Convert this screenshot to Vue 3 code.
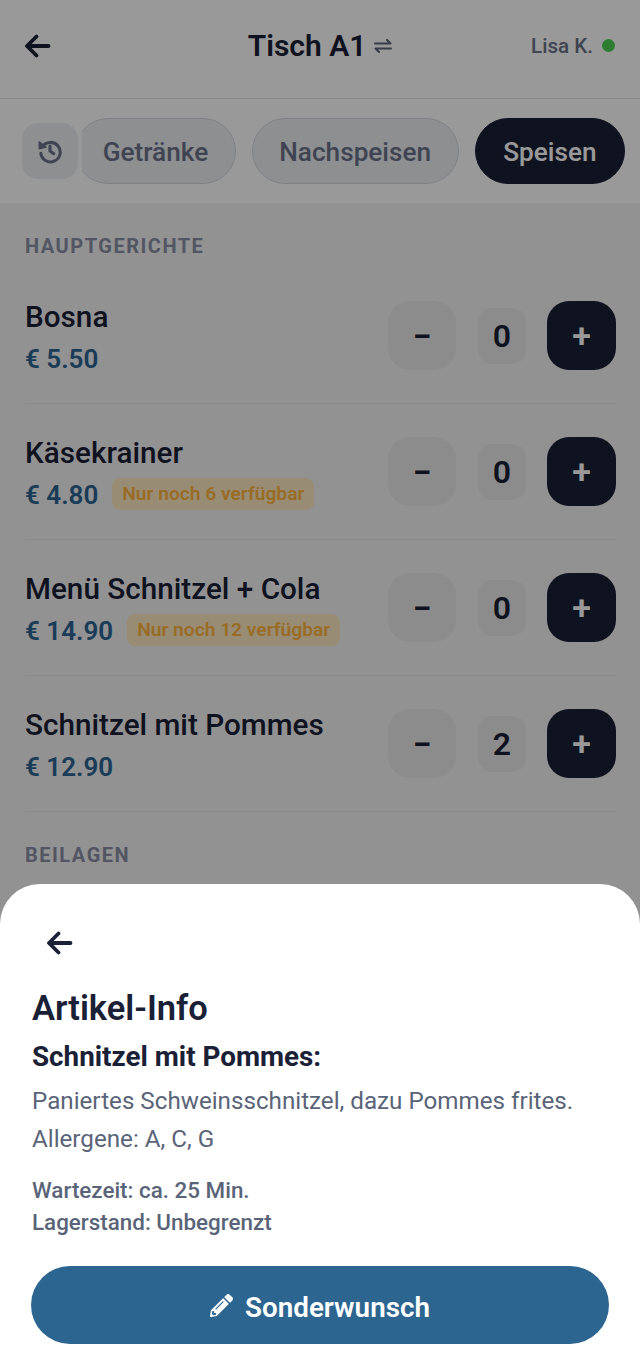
<template>
  <div class="page">
    <header class="topbar">
      <svg class="back" viewBox="0 0 26 24" fill="none" stroke="currentColor" stroke-width="3.800" stroke-linecap="round" stroke-linejoin="round">
        <path d="M23.500 12H3M11.500 2.500 2 12l9.500 9.500" />
      </svg>
      <div class="table">
        <span>Tisch A1</span>
        <svg class="swap" viewBox="0 0 18 14" fill="none" stroke="currentColor" stroke-width="2" stroke-linecap="round" stroke-linejoin="round">
          <path d="M1 4.500h15.500L13 1M17 9.500H1.500L5 13" />
        </svg>
      </div>
      <div class="user">
        <span>Lisa K.</span>
        <i class="dot"></i>
      </div>
    </header>

    <nav class="tabs">
      <button class="history">
        <svg viewBox="0 0 24 24" fill="none" stroke="currentColor" stroke-width="2.800" stroke-linecap="round" stroke-linejoin="round">
          <path d="M5 8a9 9 0 1 1-1.500 6" />
          <path d="M12 7.500V12l3.500 2.500" />
          <path d="M2 3.500 8.500 8.500 2 10z" fill="currentColor" stroke-width="1.200" />
        </svg>
      </button>
      <div class="tab-scroll">
        <button v-for="tab in tabs" :key="tab" class="tab" :class="{ active: tab === 'Speisen' }">{{ tab }}</button>
      </div>
    </nav>

    <main class="list">
      <h2 class="section">HAUPTGERICHTE</h2>
      <div v-for="item in items" :key="item.name" class="row">
        <div class="info">
          <div class="name">{{ item.name }}</div>
          <div class="meta">
            <span class="price">€ {{ item.price }}</span>
            <span v-if="item.stock" class="badge">Nur noch {{ item.stock }} verfügbar</span>
          </div>
        </div>
        <div class="stepper">
          <button class="minus">−</button>
          <span class="qty">{{ item.qty }}</span>
          <button class="plus">+</button>
        </div>
      </div>
      <h2 class="section second">BEILAGEN</h2>
    </main>

    <div class="overlay"></div>

    <section class="sheet">
      <svg class="sheet-back" viewBox="0 0 26 24" fill="none" stroke="currentColor" stroke-width="3.800" stroke-linecap="round" stroke-linejoin="round">
        <path d="M23.500 12H3M11.500 2.500 2 12l9.500 9.500" />
      </svg>
      <h1>Artikel-Info</h1>
      <h3>Schnitzel mit Pommes:</h3>
      <p class="desc">Paniertes Schweinsschnitzel, dazu Pommes frites.</p>
      <p class="desc">Allergene: A, C, G</p>
      <div class="facts">
        <div>Wartezeit: ca. 25 Min.</div>
        <div>Lagerstand: Unbegrenzt</div>
      </div>
      <button class="wish">
        <svg viewBox="0 0 512 512" fill="currentColor">
          <path d="M497.900 142.100l-46.100 46.100c-4.700 4.700-12.300 4.700-17 0l-111-111c-4.700-4.700-4.700-12.300 0-17l46.100-46.100c18.700-18.700 49.100-18.700 67.900 0l60.100 60.100c18.800 18.700 18.800 49.100 0 67.900zM284.200 99.800L21.600 362.400.4 483.900c-2.900 16.400 11.400 30.600 27.800 27.800l121.500-21.300 262.600-262.600c4.700-4.700 4.700-12.300 0-17l-111-111c-4.800-4.700-12.400-4.700-17.100 0zM124.100 339.900c-5.500-5.500-5.500-14.300 0-19.800l154-154c5.500-5.500 14.300-5.500 19.800 0s5.500 14.300 0 19.800l-154 154c-5.500 5.500-14.300 5.500-19.800 0zM88 424h48v36.300l-64.500 11.300-31.100-31.100L51.700 376H88v48z" />
        </svg>
        <span>Sonderwunsch</span>
      </button>
    </section>
  </div>
</template>

<script setup>
const tabs = ['Getränke', 'Nachspeisen', 'Speisen']

const items = [
  { name: 'Bosna', price: '5.50', qty: 0 },
  { name: 'Käsekrainer', price: '4.80', stock: 6, qty: 0 },
  { name: 'Menü Schnitzel + Cola', price: '14.90', stock: 12, qty: 0 },
  { name: 'Schnitzel mit Pommes', price: '12.90', qty: 2 }
]
</script>

<style>
body {
  margin: 0;
}
</style>

<style scoped>
.page {
  position: relative;
  width: 640px;
  height: 1369px;
  overflow: hidden;
  background: #f3f4f6;
  color: #1a2035;
  font-family: Roboto, "Liberation Sans", sans-serif;
}

button {
  font-family: inherit;
  border: 0;
  padding: 0;
}

.topbar {
  display: flex;
  align-items: center;
  justify-content: space-between;
  height: 99px;
  padding: 0 25px 7px;
  box-sizing: border-box;
  background: #fff;
  border-bottom: 1px solid #e5e7eb;
}

.back {
  width: 26px;
  height: 24px;
}

.table {
  display: flex;
  align-items: center;
  gap: 8px;
  font-size: 30px;
  font-weight: 600;
  margin-left: 58px;
}

.swap {
  width: 18px;
  height: 14px;
  color: #5a6478;
}

.user {
  display: flex;
  align-items: center;
  gap: 9px;
  font-size: 20.600px;
  font-weight: 500;
  color: #6b7289;
}

.dot {
  width: 13px;
  height: 13px;
  border-radius: 50%;
  background: #4bd055;
}

.tabs {
  display: flex;
  align-items: center;
  height: 104px;
  padding: 0 15px 0 22px;
  box-sizing: border-box;
  background: #fff;
}

.history {
  flex: none;
  display: flex;
  align-items: center;
  justify-content: center;
  width: 56px;
  height: 56px;
  margin-right: 4px;
  border-radius: 16px;
  background: #eceef1;
  color: #6b7289;
}

.history svg {
  width: 26px;
  height: 26px;
}

.tab-scroll {
  flex: 1;
  display: flex;
  justify-content: flex-end;
  gap: 16px;
  overflow: hidden;
}

.tab {
  flex: none;
  height: 66px;
  padding: 2px 26.500px 0;
  border-radius: 33px;
  border: 1px solid #d6d8de;
  background: #eceef1;
  color: #6b7289;
  font-size: 26.200px;
  font-weight: 500;
}

.tab.active {
  padding: 2px 27.500px 0;
  background: #1a2035;
  border-color: #1a2035;
  color: #fff;
}

.list {
  padding: 31px 24px 0 25px;
}

.section {
  margin: 0 0 10px;
  font-size: 20px;
  line-height: 24px;
  font-weight: 700;
  letter-spacing: 1.500px;
  color: #8a8fa3;
}

.section.second {
  margin-top: 31px;
}

.row {
  display: flex;
  align-items: center;
  justify-content: space-between;
  height: 136px;
  box-sizing: border-box;
  border-bottom: 1px solid #e5e7eb;
}

.info {
  padding-top: 3px;
}

.name {
  font-size: 29.700px;
  line-height: 36px;
  font-weight: 500;
}

.meta {
  display: flex;
  align-items: center;
  gap: 14px;
  margin-top: 8px;
}

.price {
  font-size: 26px;
  line-height: 32px;
  font-weight: 600;
  color: #2d6591;
}

.badge {
  margin-top: -2px;
  padding: 0 10px;
  height: 32px;
  line-height: 32px;
  border-radius: 8px;
  background: #fde9c4;
  color: #ffb53f;
  font-size: 19.200px;
  font-weight: 600;
}

.stepper {
  display: flex;
  align-items: center;
  gap: 21px;
}

.minus,
.plus {
  width: 68px;
  height: 69px;
  border-radius: 22px;
  font-size: 34px;
  font-weight: 600;
}

.plus {
  width: 69px;
  padding-bottom: 2px;
  background: #1a2035;
  color: #fff;
}

.minus {
  margin-right: 1px;
  background: #e9eaec;
  color: #1a2035;
}

.qty {
  display: flex;
  align-items: center;
  justify-content: center;
  width: 48px;
  height: 56px;
  border-radius: 14px;
  background: #e9eaec;
  font-size: 32px;
  font-weight: 600;
}

.overlay {
  position: absolute;
  inset: 0;
  background: rgba(0, 0, 0, 0.4);
}

.sheet {
  position: absolute;
  left: 0;
  right: 0;
  bottom: 0;
  height: 485px;
  box-sizing: border-box;
  padding: 47px 31px 0 32px;
  background: #fff;
  border-radius: 40px 40px 0 0;
}

.sheet-back {
  display: block;
  width: 26px;
  height: 24px;
  margin-left: 15px;
}

h1 {
  margin: 31px 0 0;
  font-size: 34.500px;
  line-height: 44px;
  font-weight: 600;
}

h3 {
  margin: 10px 0 0;
  font-size: 27.800px;
  line-height: 34px;
  font-weight: 700;
}

.desc {
  margin: 12px 0 0;
  font-size: 24.200px;
  line-height: 30px;
  color: #5a6478;
}

.desc + .desc {
  margin-top: 8px;
}

.facts {
  margin-top: 20px;
  font-size: 22.400px;
  line-height: 32px;
  font-weight: 500;
  color: #5a6478;
}

.wish {
  display: flex;
  align-items: center;
  justify-content: center;
  gap: 12px;
  width: 578px;
  height: 78px;
  margin-top: 28px;
  margin-left: -1px;
  border-radius: 39px;
  background: #2d6591;
  color: #fff;
  font-size: 27.800px;
  font-weight: 600;
}

.wish span {
  padding-top: 4px;
}

.wish svg {
  width: 23px;
  height: 23px;
}
</style>
